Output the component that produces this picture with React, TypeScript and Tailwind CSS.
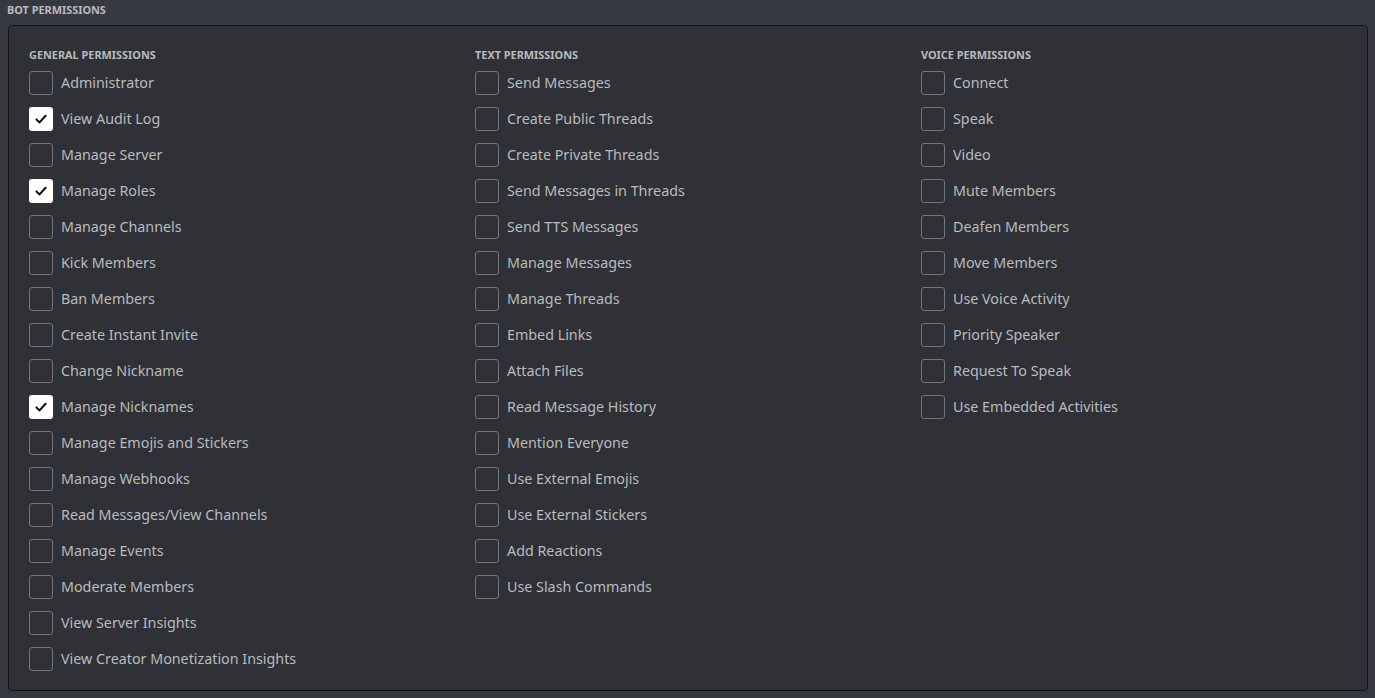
import React from "react";

const general: [string, boolean][] = [
  ["Administrator", false],
  ["View Audit Log", true],
  ["Manage Server", false],
  ["Manage Roles", true],
  ["Manage Channels", false],
  ["Kick Members", false],
  ["Ban Members", false],
  ["Create Instant Invite", false],
  ["Change Nickname", false],
  ["Manage Nicknames", true],
  ["Manage Emojis and Stickers", false],
  ["Manage Webhooks", false],
  ["Read Messages/View Channels", false],
  ["Manage Events", false],
  ["Moderate Members", false],
  ["View Server Insights", false],
  ["View Creator Monetization Insights", false],
];

const text: [string, boolean][] = [
  "Send Messages",
  "Create Public Threads",
  "Create Private Threads",
  "Send Messages in Threads",
  "Send TTS Messages",
  "Manage Messages",
  "Manage Threads",
  "Embed Links",
  "Attach Files",
  "Read Message History",
  "Mention Everyone",
  "Use External Emojis",
  "Use External Stickers",
  "Add Reactions",
  "Use Slash Commands",
].map((s) => [s, false]);

const voice: [string, boolean][] = [
  "Connect",
  "Speak",
  "Video",
  "Mute Members",
  "Deafen Members",
  "Move Members",
  "Use Voice Activity",
  "Priority Speaker",
  "Request To Speak",
  "Use Embedded Activities",
].map((s) => [s, false]);

function Row({ label, checked }: { label: string; checked: boolean }) {
  return (
    <div className="flex h-9 items-center">
      {checked ? (
        <div className="flex h-6 w-6 items-center justify-center rounded-[3px] bg-white">
          <svg width="14" height="14" viewBox="0 0 14 14" fill="none">
            <path d="M2.5 7.4 L5.6 10.4 L11.6 3.8" stroke="#111" strokeWidth="2.1" strokeLinecap="round" strokeLinejoin="round" />
          </svg>
        </div>
      ) : (
        <div className="h-6 w-6 rounded-[3px] border border-[#72767d]" />
      )}
      <span className="ml-2 text-[14.3px] text-[#b9bbbe]">{label}</span>
    </div>
  );
}

function Column({ title, items }: { title: string; items: [string, boolean][] }) {
  return (
    <div className="w-[446px]">
      <div className="h-[19px] pt-[1px] text-[10.9px] font-bold uppercase leading-[16px] text-[#b9bbbe]">{title}</div>
      {items.map(([l, c]) => (
        <Row key={l} label={l} checked={c} />
      ))}
    </div>
  );
}

export default function App() {
  return (
    <div
      className="h-[698px] w-[1375px] bg-[#36393f] pl-2 pr-[7px]"
      style={{ fontFamily: '"Noto Sans", "Open Sans", sans-serif' }}
    >
      <div className="-ml-px h-[25px] pt-[2px] text-[10.9px] font-bold uppercase leading-[16px] text-[#b9bbbe]">
        Bot Permissions
      </div>
      <div className="flex h-[666px] rounded-[4px] border border-[#131416] bg-[#2f3136] pl-5 pt-5">
        <Column title="General Permissions" items={general} />
        <Column title="Text Permissions" items={text} />
        <Column title="Voice Permissions" items={voice} />
      </div>
    </div>
  );
}
